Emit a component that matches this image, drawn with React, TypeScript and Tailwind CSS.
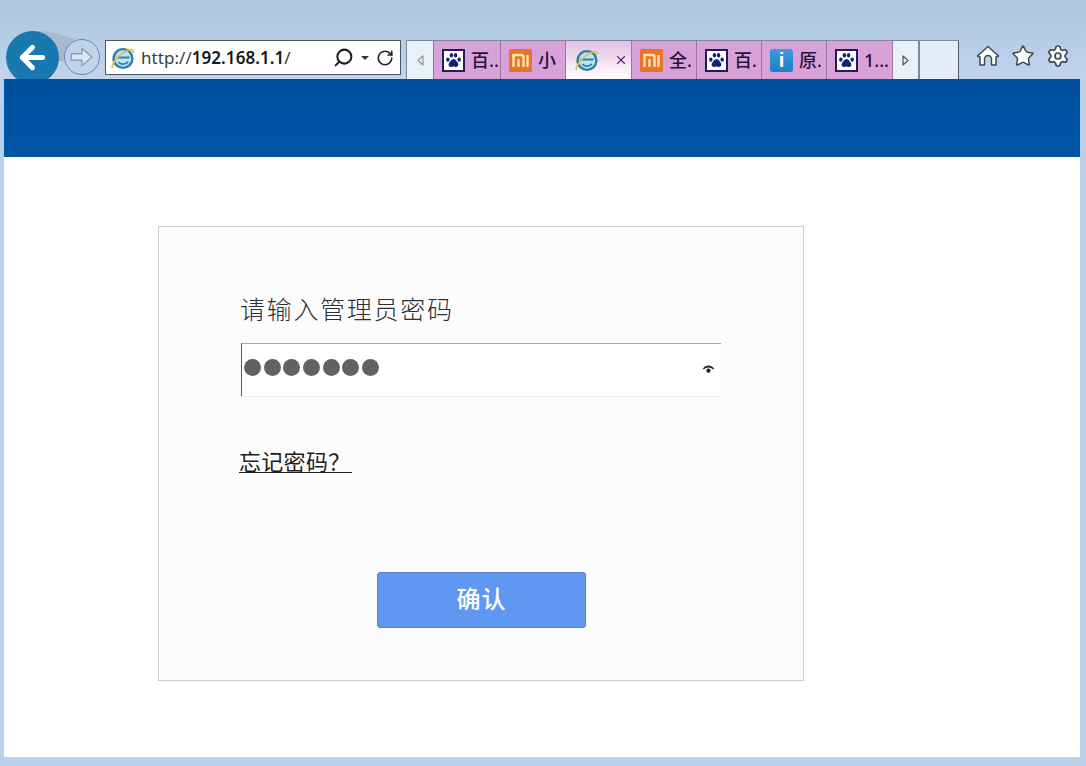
import React from 'react';
import { ArrowLeft, RotateCw, Search, Settings, Star, X } from 'lucide-react';

const cjk = "font-['Noto_Sans','Noto_Sans_CJK_SC',sans-serif]";

const IeIcon: React.FC<{ size?: number }> = ({ size = 24 }) => (
  <svg width={size} height={size} viewBox="0 0 24 24" fill="none">
    <circle cx="12" cy="12.5" r="9.4" fill="#bfe3ee" stroke="#2f7fa8" strokeWidth="2.4" />
    <path d="M5.500 11.500h13M7.500 16c2.500 3 7 3 9.500-.3" stroke="#2f7fa8" strokeWidth="1.800" />
    <path d="M1.500 22c-1.500-3 6-14 15-17.500 4-1.500 6.500-1 5.500 2.500" stroke="#d9c65a" strokeWidth="1.800" />
  </svg>
);

const PawIcon = () => (
  <span className="flex h-[23px] w-[23px] shrink-0 items-center justify-center border-2 border-[#241a5c] bg-white">
    <svg width="17" height="17" viewBox="0 0 18 18" fill="#14217c">
      <ellipse cx="3" cy="8" rx="1.800" ry="2.300" />
      <ellipse cx="6.800" cy="3.500" rx="1.800" ry="2.400" />
      <ellipse cx="11.200" cy="3.500" rx="1.800" ry="2.400" />
      <ellipse cx="15" cy="8" rx="1.800" ry="2.300" />
      <path d="M9 7.500c2.500 0 3 2.500 4.500 4 1.500 2 .5 4.500-2 4.300-1 0-1.500-.5-2.500-.5s-1.500.5-2.500.5c-2.500.2-3.500-2.300-2-4.300C6 10 6.500 7.500 9 7.500z" />
    </svg>
  </span>
);

const MiIcon = () => (
  <svg width="23" height="23" viewBox="0 0 23 23" className="shrink-0">
    <rect width="23" height="23" rx="1.500" fill="#ec7229" />
    <path d="M4.500 18V6h8a2 2 0 0 1 2 2v10M9.500 10v8M18.500 6v12" fill="none" stroke="#f9e6ac" strokeWidth="2.400" />
  </svg>
);

const InfoIcon = () => (
  <span className="flex h-[23px] w-[23px] shrink-0 items-center justify-center rounded-[3px] bg-gradient-to-b from-[#3a9be0] to-[#1d7fc4] text-[20px] leading-none font-bold text-white font-['Liberation_Sans',sans-serif]">
    i
  </span>
);

const tabs = [
  { icon: <PawIcon />, label: '百..', width: 'w-[67px]' },
  { icon: <MiIcon />, label: '小', width: 'w-[65px]' },
  { icon: null, label: '', width: 'w-[66px]' },
  { icon: <MiIcon />, label: '全.', width: 'w-[65px]' },
  { icon: <PawIcon />, label: '百.', width: 'w-[65px]' },
  { icon: <InfoIcon />, label: '原.', width: 'w-[65px]' },
  { icon: <PawIcon />, label: '1...', width: 'w-[66px]' },
];

const App: React.FC = () => {
  return (
    <div className={`flex h-[766px] w-[1086px] flex-col overflow-hidden bg-[#b9d0ea] pr-[6px] pb-[9px] pl-[4px] ${cjk}`}>
      {/* browser chrome */}
      <div className="relative -mr-[6px] -ml-[4px] flex h-[79px] shrink-0 items-start overflow-hidden bg-gradient-to-b from-[#aec5df] to-[#c0d5ec] pt-[31px] pl-[6px]">
        {/* shadow wedge between back and forward */}
        <svg width="50" height="30" viewBox="0 0 50 30" className="absolute top-[31px] left-[36px]">
          <path d="M0 0c12 0 24 3 38 8L28 30H10z" fill="#a8b9cd" />
        </svg>
        <div className="relative flex h-[53px] w-[53px] shrink-0 items-center justify-center rounded-full bg-[#1878b0]">
          <ArrowLeft size={35} color="#ffffff" strokeWidth={3.4} />
        </div>
        <div className="relative mt-[8px] ml-[5px] flex h-[36px] w-[36px] shrink-0 items-center justify-center rounded-full border border-[#6d87b3] bg-[#bfd3ea]">
          <svg width="26" height="24" viewBox="0 0 24 22" fill="#dce7f3" stroke="#8a9cb8" strokeWidth="1.200">
            <path d="M2 8h10V3l9 8-9 8v-5H2z" strokeLinejoin="round" />
          </svg>
        </div>

        {/* address bar */}
        <div className="mt-[9px] ml-[5px] flex h-[35px] w-[296px] shrink-0 items-center border border-[#4b5563] bg-white pr-[6px] pl-[5px]">
          <IeIcon />
          <span className="ml-[6px] flex-1 text-[17px] tracking-[0.05px] text-[#3a3c42]">
            http://<span className="font-semibold text-[#15171c]">192.168.1.1</span>/
          </span>
          <Search size={21} color="#1d1f24" strokeWidth={2.300} className="-scale-x-100" />
          <span className="mx-[7px] h-0 w-0 border-x-[4px] border-t-[4px] border-x-transparent border-t-[#33353a]" />
          <RotateCw size={18} color="#22252a" strokeWidth={2.200} />
        </div>

        {/* tabs */}
        <div className="mt-[9px] ml-[5px] flex h-[39px] shrink-0 border-t border-[#7c8798]">
          <div className="flex w-[28px] items-center justify-center border-x border-[#7c8798] bg-[#e8f0f9]">
            <svg width="7" height="11" viewBox="0 0 7 11" fill="none" stroke="#8a97a8" strokeWidth="1.200">
              <path d="M6 1v9L1 5.500z" strokeLinejoin="round" />
            </svg>
          </div>
          {tabs.map((tab, i) =>
            tab.icon ? (
              <div
                key={i}
                className={`flex ${tab.width} items-center gap-[6px] border-r border-[#9a76a8] bg-[#d8a2d8] pl-[8px] text-[18px] leading-none font-medium text-[#25123f]`}
              >
                {tab.icon}
                <span className="whitespace-nowrap">{tab.label}</span>
              </div>
            ) : (
              <div
                key={i}
                className={`flex ${tab.width} items-center gap-[15px] border-r border-[#9a76a8] bg-gradient-to-b from-[#e3c0e3] to-white pl-[9px]`}
              >
                <IeIcon />
                <X size={14} color="#5a2a6a" />
              </div>
            ),
          )}
          <div className="flex w-[27px] items-center justify-center border-r-2 border-[#7c8798] bg-[#e8f0f9]">
            <svg width="7" height="11" viewBox="0 0 7 11" fill="none" stroke="#4b5563" strokeWidth="1.200">
              <path d="M1 1v9l5-4.500z" strokeLinejoin="round" />
            </svg>
          </div>
          <div className="w-[39px] border-r border-[#4b5563] bg-[#e3edf9]" />
        </div>

        {/* toolbar icons */}
        <div className="mt-[13px] ml-[17px] flex items-center gap-[11px]">
          <svg width="24" height="24" viewBox="0 0 24 24" fill="#ffffff" stroke="#3f4856" strokeWidth="1.500" strokeLinejoin="round">
            <path d="M1.500 12 12 2.500 22.500 12l-2.500 1v8h-4.500v-6a3.500 3.500 0 0 0-7 0v6H4v-8z" />
          </svg>
          <Star size={24} color="#3f4856" fill="#ffffff" strokeWidth={1.500} />
          <Settings size={24} color="#3f4856" fill="#ffffff" strokeWidth={1.700} />
        </div>
      </div>

      {/* blue header */}
      <div className="h-[78px] shrink-0 bg-gradient-to-b from-[#004f9f] to-[#0055a6]" />

      {/* page */}
      <div className="flex-1 bg-white pt-[69px] pl-[154px]">
        <div className="h-[455px] w-[646px] border border-[#cdcdcd] bg-[#fcfcfc] pt-[63px] pl-[82px]">
          <h1 className="-ml-[1px] text-[25px] leading-[38px] font-light tracking-[1.700px] text-[#2c2e33]">请输入管理员密码</h1>
          <div className="mt-[15px] flex h-[53px] w-[480px] items-center border-t border-l border-t-[#a8a8a8] border-l-[#55585c] bg-white pr-[6px] pl-[2px] shadow-[0_1px_0_#ececec]">
            <div className="flex flex-1 gap-[2.700px] pb-[5px]">
              {[0, 1, 2, 3, 4, 5, 6].map((d) => (
                <span key={d} className="h-[17px] w-[17px] rounded-full bg-[#626264]" />
              ))}
            </div>
            <svg width="13" height="10" viewBox="0 0 14 10" fill="#222" className="mb-[3px]">
              <path d="M1 4.500c3-4.500 9-4.500 12 0l-1 1C9.500 2.500 4.500 2.500 2 5.500z" />
              <circle cx="7" cy="6.800" r="2.300" />
            </svg>
          </div>
          <a className="mt-[55px] -ml-[2px] inline-block border-b border-[#1c1c1c] pr-[1px] text-[22px] leading-[21px] tracking-[0.300px] text-[#1c1c1c]">
            忘记密码？
          </a>
          <button className="mt-[96px] ml-[136px] block h-[56px] w-[209px] rounded-[3px] border border-[#4f85dc] bg-[#5f97f1] pb-[3px] text-[24px] font-medium tracking-[1px] text-white">
            确认
          </button>
        </div>
      </div>
    </div>
  );
};

export default App;
